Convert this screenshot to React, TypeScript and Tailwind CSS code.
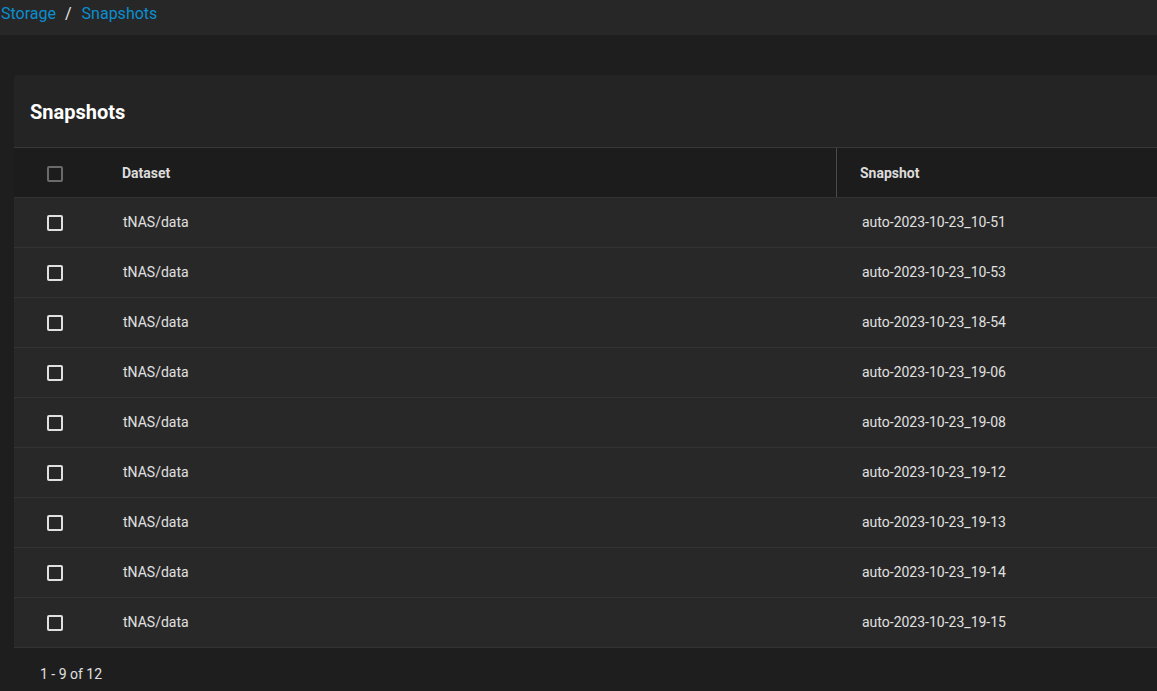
import React from "react";

const snaps = [
  "auto-2023-10-23_10-51",
  "auto-2023-10-23_10-53",
  "auto-2023-10-23_18-54",
  "auto-2023-10-23_19-06",
  "auto-2023-10-23_19-08",
  "auto-2023-10-23_19-12",
  "auto-2023-10-23_19-13",
  "auto-2023-10-23_19-14",
  "auto-2023-10-23_19-15",
];

function Box({ header }: { header?: boolean }) {
  return (
    <div
      className={
        "w-[16px] h-[16px] rounded-[2px] border-2 " +
        (header ? "border-[#6a6a6a]" : "border-[#e0e0e0]")
      }
    />
  );
}

export default function App() {
  return (
    <div
      className="w-[1157px] h-[691px] overflow-hidden bg-[#1e1e1e] text-[#e0e0e0]"
      style={{ fontFamily: "Roboto, 'Liberation Sans', sans-serif" }}
    >
      <div className="h-[35px] bg-[#272727] flex items-start pt-[3px] pl-[1px] text-[16px] leading-[22px]">
        <span className="text-[#0a8fd0]">Storage</span>
        <span className="text-[#e8e8e8] ml-[9px] mr-[10px]">/</span>
        <span className="text-[#0a8fd0]">Snapshots</span>
      </div>
      <div className="pt-[40px] pl-[14px]">
        <div className="bg-[#242424] rounded-tl-[4px] w-[1160px]">
          <div className="h-[73px] flex items-center pl-[16px] pt-[1px] border-b border-[#383838]">
            <span className="text-[20px] font-bold text-white">Snapshots</span>
          </div>
          <div className="h-[49px] bg-[#1c1c1c] flex items-center text-[14px] font-bold text-[#dcdcdc]">
            <div className="w-[108px] pl-[33px] pt-[2px] flex items-center">
              <Box header />
            </div>
            <div className="w-[715px] h-full flex items-center pt-[2px] border-r border-[#4a4a4a]">Dataset</div>
            <div className="pl-[23px] pt-[2px]">Snapshot</div>
          </div>
          {snaps.map((s) => (
            <div
              key={s}
              className="h-[50px] bg-[#282828] border-t border-[#333333] flex items-center text-[14px] text-[#e0e0e0]"
            >
              <div className="w-[108px] pl-[33px] flex items-center">
                <Box />
              </div>
              <div className="w-[716px] pl-[1px]">tNAS/data</div>
              <div className="pl-[24px]">{s}</div>
            </div>
          ))}
          <div className="h-[50px] bg-[#1e1e1e] border-t border-[#333333] flex items-center pl-[26px] pt-[3px] text-[14px] text-[#e0e0e0]">
            1 - 9 of 12
          </div>
        </div>
      </div>
    </div>
  );
}
